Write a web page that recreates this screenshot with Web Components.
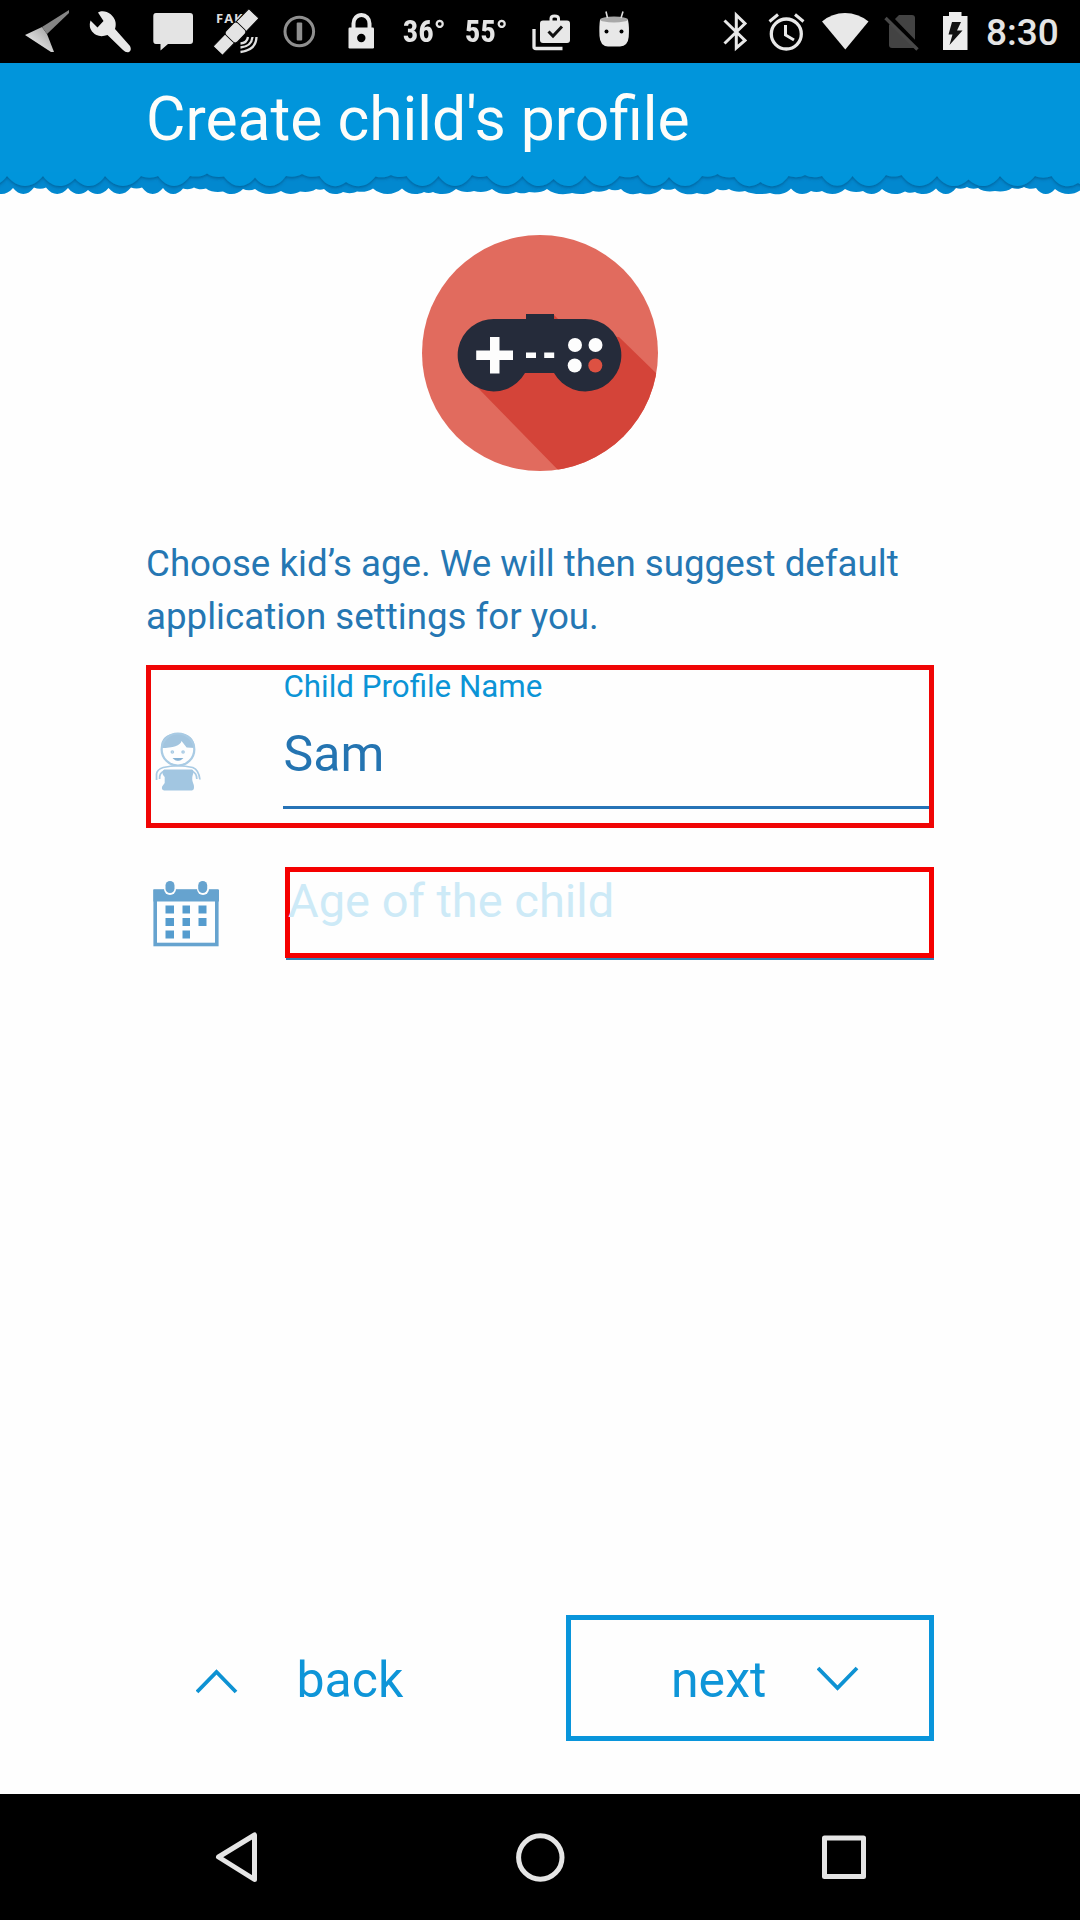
<!DOCTYPE html>
<html lang="en">
<head>
<meta charset="utf-8">
<title>Create child's profile</title>
<style>
html,body{margin:0;padding:0;background:#fefefe}
body{font-family:Roboto,"Noto Sans",sans-serif}
</style>
</head>
<body>
<profile-screen></profile-screen>
<script>
const define = (name, html, setup) => {
  const tpl = document.createElement('template');
  tpl.innerHTML = html;
  customElements.define(name, class extends HTMLElement {
    constructor() {
      super();
      this.attachShadow({mode: 'open'}).append(tpl.content.cloneNode(true));
    }
    connectedCallback() { if (setup) setup(this, this.shadowRoot); }
  });
};

// Status icons: [left edge, width, drawing]; drawings share the bar's coordinate space.
const ICONS = {
  send: [0, 80, `<defs><linearGradient id="g" x1="0" y1="1" x2="1" y2="0"><stop offset="0" stop-color="#fff"/><stop offset="1" stop-color="#999"/></linearGradient></defs><path d="M25 35 42 27 47 34 54 52 51 52Z" fill="url(#g)"/><path d="M42 27 69 10 69 13 47 34Z" fill="#858585"/>`],
  wrench: [80, 65, `<path d="M98 12.500C104 8.500 114 14 115.500 22C116 25 115.500 27 115 29L130 46Q132 50 129 52Q126 53 123 50L107.500 35Q98 38.500 92 31.500Q88.500 27 90.500 20.500L97.500 27.500 103.500 21Z" fill="#e8e8e8"/>`],
  message: [145, 60, `<path d="M156 13H190Q193 13 193 16V41Q193 44 190 44H168L160.500 50.500V44H156Q153.300 44 153.300 41V16Q153.300 13 156 13Z" fill="#e4e4e4"/>`],
  fake: [205, 62, `<text x="216" y="22.500" font-family="Open Sans,sans-serif" font-weight="700" font-size="13" letter-spacing="1" fill="#ddd">FAK</text><g transform="rotate(-46 235.500 32.500)" stroke="#000" stroke-width="1" fill="#e4e4e4"><rect x="210" y="26" width="18" height="13" rx="1"/><rect x="243" y="25.500" width="19" height="14" rx="1"/><rect x="227" y="24.500" width="17" height="16" rx="3.500"/></g><path d="M240.500 43.500Q247 43 248 37M240.500 47.500Q251.500 46.500 252.500 37M240.500 52Q256 50 256.500 37" fill="none" stroke="#e0e0e0" stroke-width="2.300"/>`],
  one: [267, 64, `<circle cx="299.300" cy="31.500" r="14.300" fill="none" stroke="#8f8f8f" stroke-width="3"/><rect x="296.700" y="22.500" width="5.500" height="18" rx="1" fill="#8f8f8f"/>`],
  lock: [331, 64, `<path d="M353.500 28V23.500a8 8.500 0 0 1 16 0V28" fill="none" stroke="#e8e8e8" stroke-width="4"/><rect x="348.500" y="27.500" width="25.500" height="21" rx="1.200" fill="#e8e8e8"/><circle cx="361.300" cy="38" r="4.200" fill="#000"/>`],
  tasks: [512, 76, `<path d="M534 29V47Q534 48.500 536 48.500H562.500" fill="none" stroke="#e8e8e8" stroke-width="3.300"/><path d="M551 21V18.500Q551 16 554.500 16Q558.500 16 558.500 18.500V21" fill="none" stroke="#e8e8e8" stroke-width="3"/><rect x="540" y="20.500" width="30" height="22.500" rx="3" fill="#e8e8e8"/><path d="M548.500 31.500 553 36 562 26.500" fill="none" stroke="#111" stroke-width="3"/>`],
  robot: [588, 132, `<path d="M600 20Q599 26 599.500 36Q600 46 608 46.500H620Q628 46 628.700 37Q629.500 27 628 20Z" fill="#e8e8e8"/><ellipse cx="614" cy="19.500" rx="14" ry="3" fill="#a8a8a8"/><path d="M606 11.500 607.500 18M623 11.500 621 18" stroke="#ddd" stroke-width="1.600"/><circle cx="606.500" cy="31.500" r="2" fill="#000"/><circle cx="621.500" cy="31.500" r="2" fill="#000"/>`],
  bluetooth: [720, 40, `<path d="M724.500 20.500 745 40.500 736.300 48V15L745 23.500 724.500 43.500" fill="none" stroke="#e8e8e8" stroke-width="3"/>`],
  alarm: [760, 54, `<circle cx="786.300" cy="34" r="15" fill="none" stroke="#e8e8e8" stroke-width="3.300"/><path d="M785.500 25V35L794 40M769.500 21.500 778 14.500M803.500 21.500 795 14.500" fill="none" stroke="#e8e8e8" stroke-width="3"/>`],
  wifi: [814, 64, `<path d="M822 21.500Q832 13 845 13Q858 13 868.500 21.500L845.300 49.500Z" fill="#e8e8e8"/>`],
  nosim: [878, 54, `<path d="M899 15H912Q915 15 915 18V48H892Q889 48 889 45V25Z" fill="#434343"/><path d="M888 15.500 920 48.500" stroke="#000" stroke-width="5"/><path d="M885.500 18 917.500 49.500" stroke="#484848" stroke-width="3.300"/>`],
  battery: [932, 50, `<path d="M949 12H961.500V16H967.500V50H943V16H949Z" fill="#ededed"/><path d="M952 22H961L957 30.500H962.500L949.500 45 952.500 34.500H948.500Z" fill="#111"/>`]
};
define('status-icon', `<style>:host{display:block;height:63px;flex:none}svg{display:block}</style>`, (el, root) => {
  const [x, w, art] = ICONS[el.getAttribute('name')];
  root.innerHTML += `<svg width="${w}" height="63" viewBox="${x} 0 ${w} 63">${art}</svg>`;
});

define('status-bar', `<style>
:host{display:flex;height:63px;background:#000;color:#e4e4e4}
.temp{width:62px;flex:none;text-align:left;font:700 32px/63px "Roboto Condensed",Roboto,sans-serif;white-space:nowrap}
.temp+.temp{width:55px}
.temp span{display:inline-block;transform:scaleX(.96);transform-origin:0 50%;padding-left:8px}
.clock{font:500 37px/66px Roboto,sans-serif;padding-left:4px;white-space:nowrap}
</style>
<status-icon name="send"></status-icon><status-icon name="wrench"></status-icon><status-icon name="message"></status-icon><status-icon name="fake"></status-icon><status-icon name="one"></status-icon><status-icon name="lock"></status-icon>
<div class="temp"><span>36°</span></div><div class="temp"><span>55°</span></div>
<status-icon name="tasks"></status-icon><status-icon name="robot"></status-icon><status-icon name="bluetooth"></status-icon><status-icon name="alarm"></status-icon><status-icon name="wifi"></status-icon><status-icon name="nosim"></status-icon><status-icon name="battery"></status-icon>
<div class="clock">8:30</div>`);

// Scalloped hem: notch points [x, y] joined by hanging arcs.
const FRONT = [[-20,16],[7,16],[43,16],[75,18.500],[105,16],[141,16],[158,16],[190,16],[207,13.500],[224,16.500],[255,17.500],[286,16],[302,14],[319.500,16],[346,22],[375.500,16.500],[391,15],[406.500,16],[438.500,16],[472,15],[487,16],[522.500,16],[553.500,19],[585,15.500],[619.500,16],[638,15],[669,17],[702,16],[717.500,14],[734.500,17],[760.500,22],[788.500,16],[805,15],[822,16],[852.500,16],[886,15],[901.500,15],[937,16],[968.500,19.500],[1000,16],[1035,16],[1051.500,16],[1078,23],[1100,16]];
const BACK = [[-10,28],[13,28],[34,27.500],[46,27.500],[68,28],[88,30],[108.500,28],[131,27.500],[142,27.500],[163,28],[183,28.500],[194,27.500],[206,28.500],[223,31.500],[243,29],[255,29],[281,31],[300,31.500],[316,29],[324,29],[343,32],[357,31.500],[373,28.500],[402,28.500],[424,32],[433,32],[456,29],[474,31],[492,29],[516,32],[529,32],[547,29],[572,33],[593,31],[609,29],[621,29],[640,33],[662,28.500],[675,28.500],[697,33],[717,29],[729,29],[745,31],[770,33],[791,28.500],[811,31],[822,31],[845,29],[863,31],[882,29],[905,31.500],[915,32],[936,28.500],[956,28],[967,27],[978,28],[995,31],[1012,28],[1024,27],[1036,28],[1055,29],[1082,29]];
const hem = (points, bottom) => {
  let d = 'M-20 0V' + points[0][1] + 'L' + points[0].join(' ');
  for (let i = 1; i < points.length; i++) {
    const [x0, y0] = points[i - 1], [x1, y1] = points[i], w = x1 - x0, mid = (y0 + y1) / 2;
    const low = Math.min(bottom, mid + w * (w < 19 ? .1 : .32));
    const c = mid + (low - mid) * 4 / 3;
    d += `C${x0 + w * .3} ${c} ${x1 - w * .3} ${c} ${x1} ${y1}`;
  }
  return d + 'V0Z';
};
define('profile-header', `<style>
:host{display:block;background:#0195db;height:110px}
h1{margin:0;padding-left:146px;font:400 60.600px/114px Roboto,sans-serif;color:#fdfdfa;white-space:nowrap}
svg{display:block;margin-top:-17px}
</style><h1><slot></slot></h1>`, (el, root) => {
  root.innerHTML += `<svg width="1080" height="36" viewBox="0 0 1080 36"><defs><filter id="s" x="-2%" y="-20%" width="104%" height="150%"><feDropShadow dx="0" dy="1.500" stdDeviation="1.800" flood-color="#003c68" flood-opacity=".5"/></filter><clipPath id="c"><path d="${hem(BACK, 34)}"/></clipPath></defs><path d="${hem(BACK, 34)}" fill="#0288cf"/><g clip-path="url(#c)"><path d="${hem(FRONT, 26)}" fill="#0195db" filter="url(#s)"/></g><rect width="1080" height="12" fill="#0195db"/></svg>`;
});

define('game-badge', `<style>:host{display:block}svg{display:block;margin:auto}</style>
<svg width="236" height="236" viewBox="0 0 236 236"><defs><clipPath id="r"><circle cx="118" cy="118" r="118"/></clipPath></defs>
<circle cx="118" cy="118" r="118" fill="#e16b5e"/>
<path clip-path="url(#r)" d="M55 152 141 240H240V144L197 102 160 100H60Z" fill="#d44439"/><path d="M132 80 136 84H131Z" fill="#d44439"/>
<path d="M104 84V79H132V84H163A36 36.200 0 1 1 132 138H103A36 36.200 0 1 1 73 84Z" fill="#252b3a"/>
<path d="M68 102h9.500v13.500h13.500v9.500h-13.500v13.500h-9.500v-13.500h-13.800v-9.500h13.800zM104 117.500h10v5.500h-10zM122.200 117.500h10v5.500h-10z" fill="#fdfdfd"/>
<circle cx="153" cy="110" r="7" fill="#fdfdfd"/><circle cx="173.500" cy="110" r="7" fill="#fdfdfd"/><circle cx="152.700" cy="130.500" r="7" fill="#fdfdfd"/><circle cx="173.300" cy="130.500" r="7" fill="#dd5142"/></svg>`);

define('child-icon', `<style>:host{display:block}svg{display:block}</style>
<svg width="49" height="60" viewBox="0 0 48 60" preserveAspectRatio="none" fill="none" stroke="#a9cbe4" stroke-width="2.200">
<path d="M6 16Q5 2 22.500 1Q39 2 39 16L31 15.500 26 9Q24 16 6 16Z" fill="#a3c5df" stroke="none"/><circle cx="22.500" cy="17.500" r="16"/><path d="M18.500 26.500Q22.500 30 26.500 26.500Z" fill="#86b2d4" stroke="#86b2d4" stroke-width="1"/><circle cx="17" cy="20" r=".7"/><circle cx="27.500" cy="20" r=".7"/>
<path d="M1.500 48V42Q2 37.500 8 35.500Q22.500 32 37 35.500Q43 38 44 47.500M4.500 47Q4 41 9 39M41 47Q41 41 36 39" stroke-width="1.700"/>
<path d="M9 37.500H36Q39 38 37 43Q35.500 47 38 53Q39 58 36 58.500H9Q6 58 7 54.500L9.500 51V45Q5 40 9 37.500Z" fill="#a2c6e1" stroke="none"/></svg>`);

define('calendar-icon', `<style>:host{display:block}svg{display:block}</style>
<svg width="67" height="66" viewBox="0 0 67 66"><rect x="2.200" y="10" width="61.600" height="53.500" fill="none" stroke="#66a3cf" stroke-width="3.600"/><path d="M.4 9H66V20.500H.4Z" fill="#66a3cf"/><rect x="11" y="-1" width="12" height="15" rx="6" fill="#fefefe"/><rect x="44" y="-1" width="12" height="15" rx="6" fill="#fefefe"/><rect x="12.500" y="0" width="9" height="12" rx="4.500" fill="#66a3cf"/><rect x="45.200" y="0" width="9" height="12" rx="4.500" fill="#66a3cf"/><path d="M12.500 24.500h8.500v8h-8.500zM29.500 24.500h7.500v8h-7.500zM45.500 24.500h8v8h-8zM12.500 37h8.500v8h-8.500zM29.500 37h7.500v8h-7.500zM45.500 37h8v8h-8zM12.500 49.500h8.500v8h-8.500zM29.500 49.500h7.500v8h-7.500z" fill="#559cce"/></svg>`);

define('name-field', `<style>
:host{display:flex;box-sizing:border-box;width:788px;height:163px;border:5px solid #f00505}
child-icon{margin:62px 0 0 4px;width:128px;flex:none}
.col{flex:1;display:flex;flex-direction:column}
label{font-size:31.300px;line-height:33px;height:36px;color:#0b94d6;white-space:nowrap;padding-left:.5px}
.value{font-size:50px;line-height:60px;color:#2474b1;margin-top:18px;height:84px;box-sizing:border-box;padding-left:.5px}
.line{height:3px;background:#2673b6;margin-top:-2px}
</style><child-icon></child-icon><div class="col"><label><slot name="label"></slot></label><div class="value"><slot></slot></div><div class="line"></div></div>`);

define('age-field', `<style>
:host{display:flex;height:93px}
calendar-icon{margin:14px 0 0 7px;width:132px;flex:none}
.col{width:649px}
.box{box-sizing:border-box;height:91px;border:5px solid #f50000;font-size:47px;line-height:58px;color:#cdeaf7;white-space:nowrap;text-indent:-2px}
.line{height:2px;margin-left:1px;background:#2d80b5}
</style><calendar-icon></calendar-icon><div class="col"><div class="box"><slot></slot></div><div class="line"></div></div>`);

define('step-nav', `<style>
:host{display:flex;justify-content:space-between;height:126px;color:#0e95d8;font-size:50px;line-height:58px}
.back,.next{display:flex;box-sizing:border-box}
.back{padding:36px 0 0 50px}
.next{width:368px;border:5px solid #0995db;padding:31px 0 0 100px}
svg{display:block;fill:none;stroke:#0e92d3;stroke-width:3.800}
.back svg{margin:17px 58.500px 0 0}.next svg{margin:15px 0 0 50.500px}
</style><div class="back"><svg width="42" height="26"><path d="M1 24 20.500 4 40 24"/></svg><span>back</span></div><div class="next"><span>next</span><svg width="42" height="26"><path d="M1 2 20.500 22 40 2"/></svg></div>`);

define('android-nav', `<style>:host{display:flex;height:126px;background:#000;align-items:center;justify-content:space-between;padding:0 212px;box-sizing:border-box}svg{display:block;fill:none;stroke:#e5e5e5;stroke-width:5;stroke-linejoin:round}</style>
<svg width="50" height="56" viewBox="0 0 50 56"><path d="M6.500 28 42.500 6V50.500Z"/></svg><svg width="56" height="56"><circle cx="28.300" cy="28.500" r="21.700"/></svg><svg width="50" height="56"><rect x="6.500" y="9" width="39" height="38.500"/></svg>`);

define('profile-screen', `<style>
:host{display:flex;flex-direction:column;width:1080px;height:1920px;overflow:hidden;background:#fefefe}
main{flex:1;display:flex;flex-direction:column;padding:61.500px 146px 53px}
p{margin:67.500px 0 0;font-size:36.700px;line-height:52.500px;color:#2577b3;white-space:nowrap}
name-field{margin-top:22px}age-field{margin-top:39px}step-nav{margin-top:auto}
</style><status-bar></status-bar><profile-header>Create child's profile</profile-header>
<main><game-badge></game-badge><p>Choose kid’s age. We will then suggest default<br>application settings for you.</p>
<name-field><span slot="label">Child Profile Name</span>Sam</name-field><age-field>Age of the child</age-field><step-nav></step-nav></main><android-nav></android-nav>`);
</script>
</body>
</html>
